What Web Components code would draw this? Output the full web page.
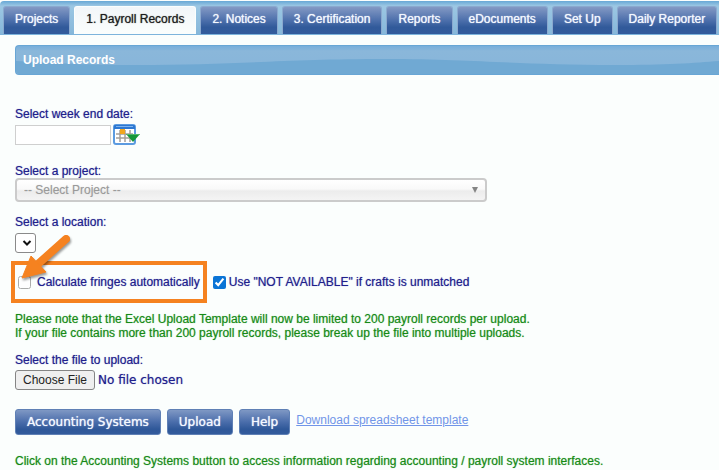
<!DOCTYPE html>
<html lang="en">
<head>
<meta charset="utf-8">
<title>Payroll Records</title>
<style>
  body {
    margin: 0;
    background: #fbfefd;
    color: #20208c;
    font: 12px/14px "Liberation Sans", Arial, sans-serif;
    overflow-x: hidden;
  }
</style>
</head>
<body>
<payroll-app></payroll-app>

<script>
class TabBar extends HTMLElement {
  constructor() {
    super();
    this.attachShadow({ mode: "open" });
    this.shadowRoot.innerHTML = `
      <style>
        :host {
          display: block;
          margin-top: 1px;
          background: linear-gradient(#68a8d6, #9cc7e3 5px, #86b7da);
          border-bottom: 1px solid #7db4dc;
          border-radius: 4px 0 0 0;
          overflow: hidden;
        }
        nav {
          display: flex;
          gap: 4px;
          padding: 5px 3px 0;
        }
      </style>
      <nav><slot></slot></nav>
    `;
  }
}
customElements.define("tab-bar", TabBar);

class TabItem extends HTMLElement {
  constructor() {
    super();
    this.attachShadow({ mode: "open" });
    this.shadowRoot.innerHTML = `
      <style>
        :host {
          display: block;
          flex: none;
        }
        a {
          display: block;
          padding: 5px 11px 8px;
          border: 1px solid #8aa9cf;
          border-bottom: 0;
          border-radius: 3px 3px 0 0;
          background: linear-gradient(#8399c4, #4c6fab 50%, #315a9a 75%, #335b9c);
          color: #f4f8ff;
          text-decoration: none;
          text-shadow: 0 0 1px #f4f8ff;
          white-space: nowrap;
        }
        :host([active]) a {
          margin-bottom: -1px;
          padding-bottom: 9px;
          border-color: #fbfefd;
          background: linear-gradient(#f2f6f9, #fbfefd);
          color: #1c1c1c;
          text-shadow: 0 0 1px #555;
        }
      </style>
      <a href="#"><slot></slot></a>
    `;
  }
}
customElements.define("tab-item", TabItem);

class SectionTitle extends HTMLElement {
  constructor() {
    super();
    this.attachShadow({ mode: "open" });
    this.shadowRoot.innerHTML = `
      <style>
        :host {
          display: block;
          position: relative;
          border: 1px solid #68a6d5;
          border-right: 0;
          border-radius: 4px 0 0 4px;
          background: linear-gradient(#78aedb, #8ab7da 5px, #87b5da);
          overflow: hidden;
        }
        svg {
          position: absolute;
          inset: 0;
          width: 100%;
          height: 100%;
        }
        h1 {
          position: relative;
          margin: 0;
          padding: 7px;
          color: #fff;
          font: bold 12px/14px "Liberation Sans", Arial, sans-serif;
        }
      </style>
      <svg viewBox="0 0 704 28" preserveAspectRatio="none" aria-hidden="true">
        <path d="M0 15C50 18 80 19 120 19C220 19 270 13 370 13C460 13 500 19 600 19C650 19 680 17 704 15V28H0Z" fill="#70a9d3"/>
      </svg>
      <h1><slot></slot></h1>
    `;
  }
}
customElements.define("section-title", SectionTitle);

class DateField extends HTMLElement {
  constructor() {
    super();
    this.attachShadow({ mode: "open" });
    this.shadowRoot.innerHTML = `
      <style>
        :host { display: block; }
        label { display: block; margin-bottom: 3px; text-shadow: 0 0 1px #8080c0; }
        .row { display: flex; align-items: center; gap: 2px; }
        input {
          box-sizing: border-box;
          width: 96px;
          height: 20px;
          border: 1px solid #cfcfcf;
          background: #fff;
          font: inherit;
        }
        button {
          display: block;
          padding: 0;
          border: 0;
          background: none;
        }
        svg { display: block; }
      </style>
      <label for="date"><slot></slot></label>
      <div class="row">
        <input id="date" type="text">
        <button type="button" aria-label="Open calendar">
          <svg width="28" height="22" viewBox="0 0 28 22">
            <rect x="1" y="1" width="21" height="19" rx="2" fill="#fff" stroke="#5c9be0" stroke-width="2"/>
            <path d="M1 2q0-1 1-1h19q1 0 1 1v3H1z" fill="#2d78d2"/>
            <path d="M3 2h17v1H3z" fill="#7fb4ee"/>
            <path d="M3 10h17M3 14h17M7 6v12M12 6v12M17 6v12" stroke="#a5a099" stroke-width="1.500" fill="none"/>
            <path d="M7 5h5v5H7z" fill="#f2a61d"/>
            <path d="M13 10h14l-7 8z" fill="#16973a"/>
            <path d="M13 10h14l-1 1H14z" fill="#54b56b"/>
          </svg>
        </button>
      </div>
    `;
  }
}
customElements.define("date-field", DateField);

class SelectField extends HTMLElement {
  constructor() {
    super();
    this.attachShadow({ mode: "open" });
    const option = this.getAttribute("option") || "";
    this.shadowRoot.innerHTML = `
      <style>
        :host { display: block; }
        label { display: block; text-shadow: 0 0 1px #8080c0; }
        .box { display: grid; width: 66%; min-width: 472px; }
        select, svg { grid-area: 1 / 1; }
        select {
          appearance: none;
          box-sizing: border-box;
          width: 100%;
          height: 24px;
          margin: 0;
          padding: 0 24px 0 7px;
          border: 2px solid #cbcbcb;
          border-radius: 4px;
          background: linear-gradient(#fff, #f9f9f9 45%, #ececec 55%, #f4f4f4);
          color: #9a9a9a;
          font: inherit;
          text-shadow: 0 0 1px #ccc;
        }
        svg {
          align-self: center;
          justify-self: end;
          margin-right: 8px;
          pointer-events: none;
        }
        .thick { display: none; }
        :host([compact]) label { margin-bottom: 4px; }
        :host([compact]) .box { width: 21px; min-width: 0; }
        :host([compact]) select {
          height: 20px;
          padding: 0;
          border: 1px solid #8a8a8a;
          border-radius: 3px;
          background: #fff;
        }
        :host([compact]) svg { margin-right: 4px; }
        :host([compact]) .thin { display: none; }
        :host([compact]) .thick { display: block; }
      </style>
      <label for="select"><slot></slot></label>
      <div class="box">
        <select id="select"><option>${option}</option></select>
        <svg class="thin" width="8" height="6" viewBox="0 0 8 6" aria-hidden="true"><path d="M1 0h6L4 6z" fill="#858585"/></svg>
        <svg class="thick" width="10" height="8" viewBox="0 0 10 8" aria-hidden="true"><path d="M1.500 2L5 5.500L8.500 2" fill="none" stroke="#111" stroke-width="2"/></svg>
      </div>
    `;
  }
}
customElements.define("select-field", SelectField);

class CheckField extends HTMLElement {
  constructor() {
    super();
    this.attachShadow({ mode: "open" });
    const checked = this.hasAttribute("checked") ? "checked" : "";
    this.shadowRoot.innerHTML = `
      <style>
        :host { display: block; }
        label {
          display: flex;
          align-items: center;
          gap: var(--check-gap, 3px);
          text-shadow: 0 0 1px #8080c0;
          white-space: nowrap;
        }
        input {
          width: 13px;
          height: 13px;
          margin: 0;
          accent-color: #0a74d6;
        }
        input:not(:checked) { opacity: 0.6; }
      </style>
      <label><input type="checkbox" ${checked}><span><slot></slot></span></label>
    `;
  }
}
customElements.define("check-field", CheckField);

// Orange frame with an arrow pointing at the control inside it
class CalloutBox extends HTMLElement {
  constructor() {
    super();
    this.attachShadow({ mode: "open" });
    this.shadowRoot.innerHTML = `
      <style>
        :host {
          display: block;
          position: relative;
          padding: 10px 3px;
          border: 4px solid #f58220;
        }
        svg {
          position: absolute;
          left: 0;
          top: -35px;
          pointer-events: none;
          filter: drop-shadow(1px 2px 1px #0006);
        }
      </style>
      <slot></slot>
      <svg width="64" height="56" viewBox="15 230 64 56" aria-hidden="true">
        <path d="M66 239L38 264" stroke="#f58220" stroke-width="8" stroke-linecap="round"/>
        <path d="M22 278L31 256L46 272Z" fill="#f58220" stroke="#f58220" stroke-linejoin="round"/>
      </svg>
    `;
  }
}
customElements.define("callout-box", CalloutBox);

class FileField extends HTMLElement {
  constructor() {
    super();
    this.attachShadow({ mode: "open" });
    this.shadowRoot.innerHTML = `
      <style>
        :host { display: block; }
        label { display: block; margin-bottom: 3px; text-shadow: 0 0 1px #8080c0; }
        input {
          display: block;
          width: 100%;
          color: inherit;
          font: 12px/14px "DejaVu Sans", Verdana, sans-serif;
          text-shadow: 0 0 1px #8080c0;
        }
        input::file-selector-button {
          box-sizing: border-box;
          height: 20px;
          margin: 0 3px 0 0;
          padding: 0 7px;
          border: 1px solid #858585;
          border-radius: 3px;
          background: #efefef;
          color: #222;
          font: 12px/14px "Liberation Sans", Arial, sans-serif;
        }
      </style>
      <label for="file"><slot></slot></label>
      <input id="file" type="file">
    `;
  }
}
customElements.define("file-field", FileField);

class ActionButton extends HTMLElement {
  constructor() {
    super();
    this.attachShadow({ mode: "open" });
    this.shadowRoot.innerHTML = `
      <style>
        :host { display: block; }
        button {
          display: block;
          height: 26px;
          padding: 0 11px;
          border: 1px solid #5f80b5;
          border-radius: 3px;
          background: linear-gradient(#7f98c4, #4a6dab 50%, #2f5899 80%, #335b9c);
          color: #f4f8ff;
          font: 12px/14px "DejaVu Sans", Verdana, sans-serif;
          text-shadow: 0 0 1px #f4f8ff;
        }
      </style>
      <button type="button"><slot></slot></button>
    `;
  }
}
customElements.define("action-button", ActionButton);

class NoteText extends HTMLElement {
  constructor() {
    super();
    this.attachShadow({ mode: "open" });
    this.shadowRoot.innerHTML = `
      <style>
        :host { display: block; color: #168a16; }
        p { margin: 0; text-shadow: 0 0 1px #80c080; }
      </style>
      <p><slot></slot></p>
    `;
  }
}
customElements.define("note-text", NoteText);

class PayrollApp extends HTMLElement {
  constructor() {
    super();
    this.attachShadow({ mode: "open" });
    this.shadowRoot.innerHTML = `
      <style>
        :host { display: block; }
        main { padding: 10px 0 0 15px; }
        form { display: block; padding-top: 32px; }
        date-field { margin-bottom: 18px; }
        select-field { margin-bottom: 13px; }
        select-field[compact] { margin-bottom: 8px; }
        .checks { display: flex; align-items: center; gap: 6px; margin: 0 0 9px -4px; }
        callout-box { --check-gap: 6px; }
        note-text { margin-bottom: 13px; }
        file-field { margin-bottom: 19px; }
        .actions { display: flex; gap: 6px; margin-bottom: 19px; }
        .actions a { margin-top: 4px; color: #7195e8; }
      </style>
      <tab-bar>
        <tab-item>Projects</tab-item>
        <tab-item active>1. Payroll Records</tab-item>
        <tab-item>2. Notices</tab-item>
        <tab-item>3. Certification</tab-item>
        <tab-item>Reports</tab-item>
        <tab-item>eDocuments</tab-item>
        <tab-item>Set Up</tab-item>
        <tab-item>Daily Reporter</tab-item>
      </tab-bar>
      <main>
        <section-title>Upload Records</section-title>
        <form>
          <date-field>Select week end date:</date-field>
          <select-field option="-- Select Project --">Select a project:</select-field>
          <select-field compact>Select a location:</select-field>
          <div class="checks">
            <callout-box><check-field>Calculate fringes automatically</check-field></callout-box>
            <check-field checked>Use "NOT AVAILABLE" if crafts is unmatched</check-field>
          </div>
          <note-text>Please note that the Excel Upload Template will now be limited to 200 payroll records per upload.<br>If your file contains more than 200 payroll records, please break up the file into multiple uploads.</note-text>
          <file-field>Select the file to upload:</file-field>
          <div class="actions">
            <action-button>Accounting Systems</action-button>
            <action-button>Upload</action-button>
            <action-button>Help</action-button>
            <a href="#">Download spreadsheet template</a>
          </div>
          <note-text>Click on the Accounting Systems button to access information regarding accounting / payroll system interfaces.</note-text>
        </form>
      </main>
    `;
  }
}
customElements.define("payroll-app", PayrollApp);
</script>
</body>
</html>
